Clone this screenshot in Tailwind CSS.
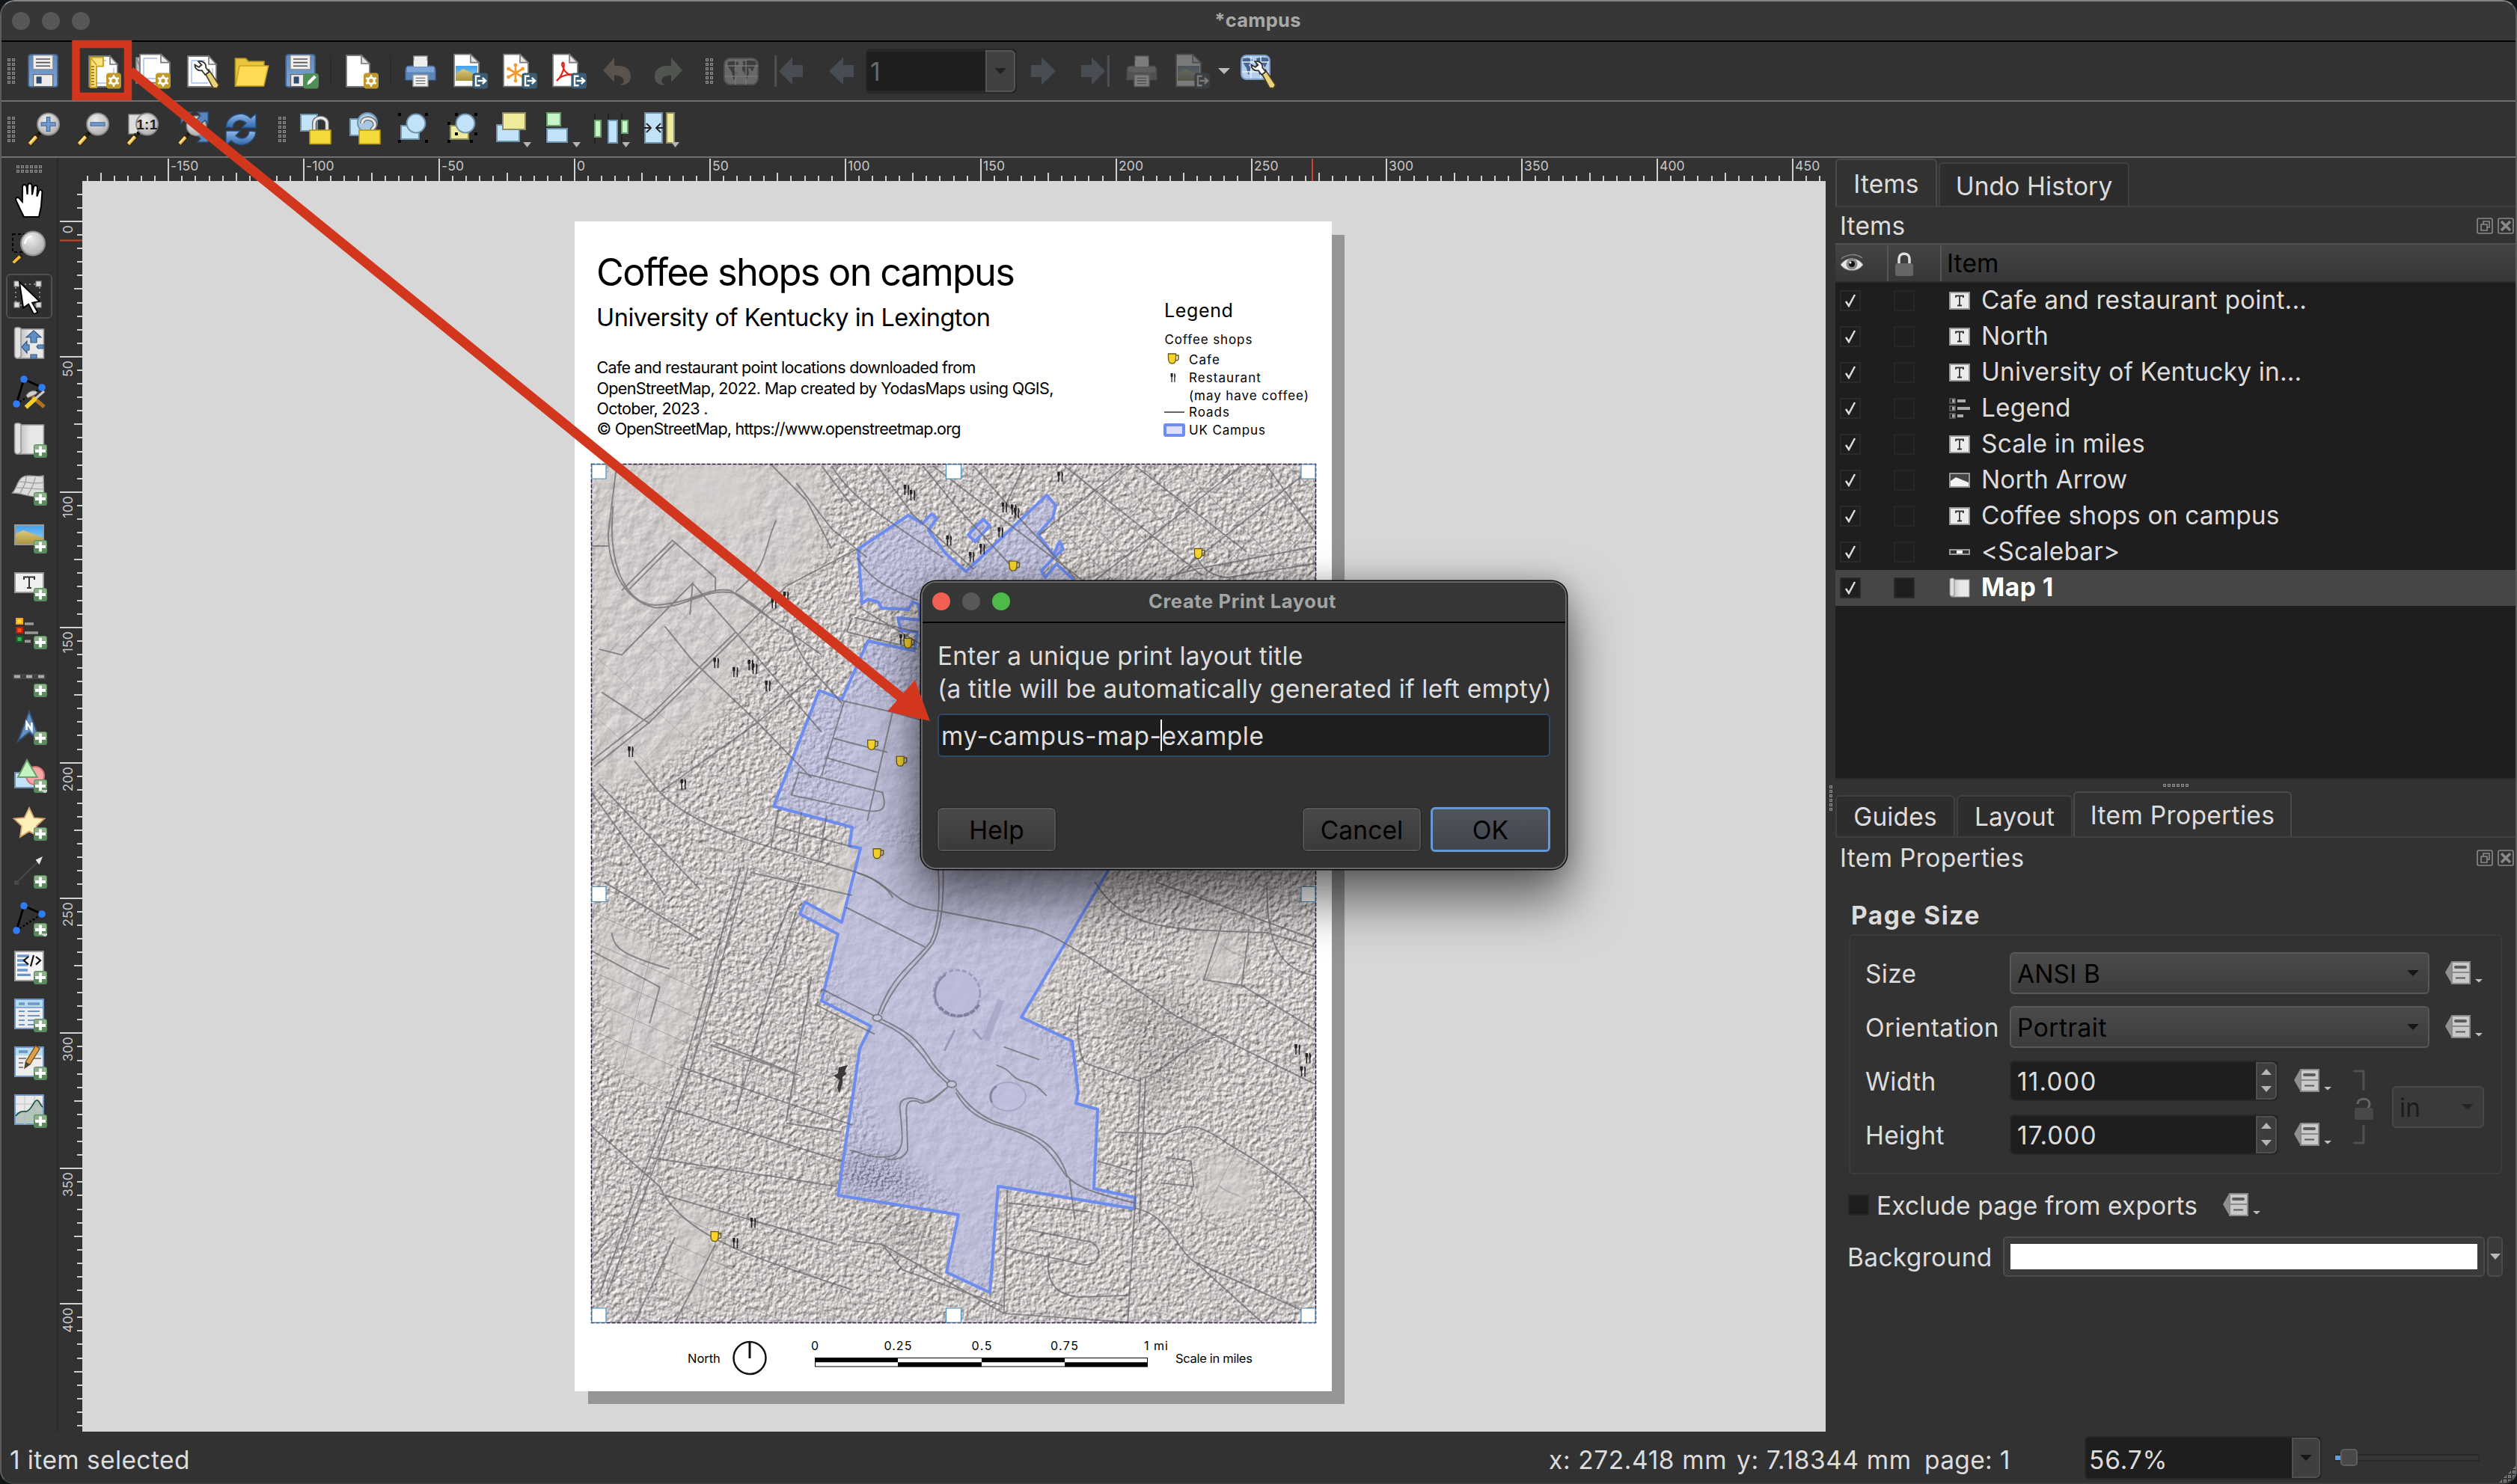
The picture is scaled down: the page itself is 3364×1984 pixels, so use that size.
<!DOCTYPE html>
<html lang="en">
<head>
<meta charset="utf-8">
<title>*campus</title>
<script src="https://cdn.jsdelivr.net/npm/@tailwindcss/browser@4"></script>
</head>
<body class="bg-[#101517] w-[3364px] h-[1984px] overflow-hidden font-['Inter',sans-serif] text-[33.5px] leading-none tracking-[.004em] text-[#dcdcdc]">

<!-- Icon library, 24-unit grid -->
<svg class="absolute size-0">
  <defs>
    <linearGradient id="gFlop" x1="0" y1="0" x2="0" y2="1"><stop offset="0" stop-color="#6089bb"/><stop offset="1" stop-color="#7ba6d6"/></linearGradient>
    <linearGradient id="gGrey" x1="0" y1="0" x2="1" y2="0"><stop offset="0" stop-color="#b8b8b8"/><stop offset=".5" stop-color="#e8e8e8"/></linearGradient>
    <linearGradient id="gSky" x1="0" y1="0" x2="0" y2="1"><stop offset="0" stop-color="#3fa0ea"/><stop offset="1" stop-color="#a5d6f5"/></linearGradient>
    <linearGradient id="gSand" x1="0" y1="0" x2="0" y2="1"><stop offset="0" stop-color="#dccb7c"/><stop offset="1" stop-color="#a8923c"/></linearGradient>
    <linearGradient id="gBlue" x1="0" y1="0" x2="0" y2="1"><stop offset="0" stop-color="#8fb8e6"/><stop offset="1" stop-color="#2f66ab"/></linearGradient>
    <radialGradient id="gLens" cx=".4" cy=".3" r=".8"><stop offset="0" stop-color="#ececec"/><stop offset="1" stop-color="#a9a9a9"/></radialGradient>
    <pattern id="pDots" width="6" height="6" patternUnits="userSpaceOnUse"><rect width="4" height="4" fill="#8a8a8a"/><rect x="1" y="1" width="2" height="2" fill="#555"/></pattern>
  </defs>
  <symbol id="bPlus" viewBox="0 0 24 24"><rect x="15" y="15" width="9" height="9" rx="1.6" fill="#5a8c5a"/><path d="M15.5 19V16.5a1 1 0 0 1 1-1h6a1 1 0 0 1 1 1V19z" fill="#8db08d"/><path d="M19.5 16.2v6.6M16 19.5h7" stroke="#fff" stroke-width="1.9"/></symbol>
  <symbol id="bGear" viewBox="0 0 24 24"><rect x="14" y="13.3" width="10" height="10.4" rx="2" fill="#bf9a2b"/><circle cx="19" cy="18.5" r="2.1" fill="none" stroke="#fff" stroke-width="1.5"/><path d="M19 14.6v1.9M19 20.5v1.9M15.6 16.6l1.7 1M20.7 19.5l1.7 1M15.6 20.4l1.7-1M20.7 17.6l1.7-1" stroke="#fff" stroke-width="1.3"/></symbol>
  <symbol id="bExp" viewBox="0 0 24 24"><rect x="13.7" y="13.3" width="10.3" height="10.4" rx="2" fill="#3a5d75"/><path d="M18.8 15.4h-2.8v6.2h2.8M17.3 18.5h4.9M20.4 16.4l2.2 2.1-2.2 2.1" fill="none" stroke="#fff" stroke-width="1.2"/></symbol>
  <symbol id="save" viewBox="0 0 24 24"><path d="M3 1h17.5l1 1v19.7l-1 .9H3l-1-.9V2z" fill="url(#gFlop)" stroke="#3f618c" stroke-width=".9"/><rect x="5" y="1.4" width="13.4" height="9.5" fill="#ededed" stroke="#888" stroke-width=".6"/><path d="M7 4h9.5M7 6.3h9.5M7 8.6h9.5" stroke="#555" stroke-width=".8"/><rect x="5.3" y="14.3" width="13" height="8" fill="#ececec" stroke="#666" stroke-width=".6"/><rect x="7.3" y="15.7" width="3.5" height="4.6" fill="#2d4a72"/></symbol>
  <symbol id="page" viewBox="0 0 24 24"><path d="M2.5 2h14l5 5.500v15h-19z" fill="#fff" stroke="#777" stroke-width=".9"/><path d="M16.500 2v5.500h5z" fill="#eee" stroke="#777" stroke-width=".8"/><path d="M5 5h9M5 20h11M19 10v8" stroke="#b9cbf2" stroke-width=".9"/></symbol>
  <symbol id="newLayout" viewBox="0 0 24 24"><use href="#page"/><path d="M3.500 2.800H12v6H7.500V23h-4z" fill="#fbe27a" stroke="#c99f1c" stroke-width=".9"/><path d="M3.500 3l4 5" stroke="#c99f1c" stroke-width=".8"/><path d="M4 9h2M4 11h2M4 13h2M4 15h2M4 17h2M4 19h2M4 21h2" stroke="#8d6b0a" stroke-width=".8"/><use href="#bGear"/></symbol>
  <symbol id="dupLayout" viewBox="0 0 24 24"><path d="M1 3h19v19H9z M1 3v17h9" fill="#bbb" stroke="#888" stroke-width=".8"/><path d="M3.500.8h14l6 5.500v13.500h-20z" fill="#fff" stroke="#777" stroke-width=".9"/><path d="M17.500.8v5.500h6z" fill="#eee" stroke="#777" stroke-width=".8"/><path d="M6 3.500h9M6 3.500V17M6 17h9" fill="none" stroke="#b9cbf2" stroke-width=".9"/><use href="#bGear"/></symbol>
  <symbol id="wrench" viewBox="0 0 24 24"><path d="M13.500 12.500l3-1.500 6.800 10.300-1.300 2.200-2.600-.3z" fill="#e8d27c" stroke="#4a4020" stroke-width=".8"/><path d="M9.600 5.600c2.600-.8 5.400 1.200 5 4.200l2.200 2.700-2.700 2-2.200-2.900c-2.500.6-4.700-1.200-4.700-3.800l2.700 1.600 1.800-1.500z" fill="#fff" stroke="#333" stroke-width=".9"/></symbol>
  <symbol id="layoutMgr" viewBox="0 0 24 24"><use href="#page"/><path d="M5 5v15" stroke="#b9cbf2" stroke-width=".9"/><use href="#wrench"/></symbol>
  <symbol id="folder" viewBox="0 0 24 24"><path d="M1.200 3.500h7l1.800 2h10.500V10L2 22H1.200z" fill="#e8c53a" stroke="#b08f1c" stroke-width=".8"/><path d="M4 8.500h19.300L20.300 22H1.400z" fill="#ffdc52" stroke="#c8a428" stroke-width=".8"/></symbol>
  <symbol id="saveTpl" viewBox="0 0 24 24"><use href="#save"/><rect x="13.500" y="13.500" width="10.500" height="10.300" rx="2" fill="#4f8f55"/><path d="M16.200 21.300l.7-2.500 4-4 1.500 1.500-4 4z" fill="#fff"/></symbol>
  <symbol id="narrow" viewBox="0 0 24 24"><path d="M2.500 1.500h10l5.500 5.500v15.500h-15.500z" fill="#fff" stroke="#777" stroke-width=".9"/><path d="M12.500 1.500V7H18z" fill="#e5e5e5" stroke="#777" stroke-width=".8"/></symbol>
  <symbol id="newPage" viewBox="0 0 24 24"><use href="#narrow"/><use href="#bGear"/></symbol>
  <symbol id="print" viewBox="0 0 24 24"><rect x="7.500" y="2" width="9" height="9" fill="#eee" stroke="#999" stroke-width=".7"/><path d="M4.500 8.500h15c1.500 0 2.500 1 2.500 3v6.500H2V11.500c0-2 1-3 2.500-3z" fill="#5b86ba" stroke="#45699a" stroke-width=".6"/><path d="M3 9.300h18v3.500H3z" fill="#7fa6d4"/><rect x="7.500" y="5" width="9" height="4" fill="#eee"/><rect x="7" y="14.500" width="10" height="7.800" fill="#f1f1f1" stroke="#999" stroke-width=".7"/><path d="M8.800 16.700h6.400M8.800 18.500h6.400M8.800 20.300h6.400" stroke="#777" stroke-width=".7"/></symbol>
  <symbol id="expImg" viewBox="0 0 24 24"><path d="M1.500.800h11l5.500 5.500v16h-16.500z" fill="#fff" stroke="#777" stroke-width=".9"/><path d="M12.500.800v5.500H18z" fill="#e5e5e5" stroke="#777" stroke-width=".8"/><rect x="2.500" y="8.500" width="14.500" height="10" fill="url(#gSky)"/><path d="M2.500 14l5-3.500L17 15v3.500H2.500z" fill="url(#gSand)"/><use href="#bExp"/></symbol>
  <symbol id="expSvg" viewBox="0 0 24 24"><path d="M1.500.800h11l5.500 5.500v16h-16.500z" fill="#fff" stroke="#777" stroke-width=".9"/><path d="M12.500.800v5.500H18z" fill="#e5e5e5" stroke="#777" stroke-width=".8"/><path d="M9.500 8v11M4.800 10.500l9.500 5.500M4.800 16l9.500-5.500" stroke="#f79a2b" stroke-width="1.300"/><g fill="#f79a2b"><circle cx="9.500" cy="8" r="1.200"/><circle cx="9.500" cy="18.500" r="1.200"/><circle cx="4.800" cy="10.500" r="1.200"/><circle cx="14.300" cy="10.500" r="1.200"/><circle cx="4.800" cy="16" r="1.200"/></g><use href="#bExp"/></symbol>
  <symbol id="expPdf" viewBox="0 0 24 24"><path d="M1.500.800h11l5.500 5.500v16h-16.500z" fill="#fff" stroke="#777" stroke-width=".9"/><path d="M12.500.800v5.500H18z" fill="#e5e5e5" stroke="#777" stroke-width=".8"/><path d="M4 18.500c2-1.500 5.500-7 4.800-11.500-.6-1.700-1.800 0-.8 2 1.200 3.500 4 6.500 8 5.700M4 18.500c2-3 7-4.600 11.500-4.300" fill="none" stroke="#e2241b" stroke-width="1.100"/><use href="#bExp"/></symbol>
  <symbol id="undo" viewBox="0 0 24 24"><path d="M9.500 3v5.500c6-.5 11 1.500 11 7 0 3.800-2.500 6-6.500 5.800l-1-.3c4 0 4.500-6-3.500-6.200v4.700L2 11.500z" fill="#5a524c"/></symbol>
  <symbol id="redo" viewBox="0 0 24 24"><path d="M14.500 3v5.500c-6-.5-11 1.500-11 7 0 3.800 2.500 6 6.500 5.800l1-.3c-4 0-4.500-6 3.500-6.200v4.700L22 11.500z" fill="#50554f"/></symbol>
  <symbol id="globe" viewBox="0 0 24 24"><path d="M3 5.500c1.200.4 3.500-.5 4.500 0 1.500.2 2.700.3 2.500 1.500-.4 1-1.300 1-1.500 2-.5.800-1.500 1.200-1.300 2 .8.500 1.800 1.500 1.500 2.500-.4 1-1 2.500-1.500 4.500-.9-1-1.200-4-1.700-5.300C5 12 3.500 9.500 2.500 8zM12.500 6c1.800-1.200 5-1.400 8.500-.8l1 1.700-1.300 2.500-1.500 3-1.700-2.500-1 .5.500 3-1.500 4.500c-.9-.4-1.200-3.500-1.500-5l-1.500-1.500c-.2-1.700.2-3.500 1-4.500z"/></symbol>
  <symbol id="atlas" viewBox="0 0 24 24"><rect x=".5" y="3.500" width="22.500" height="17.500" rx="4" fill="#686868" stroke="#505050"/><use href="#globe" fill="#3e3e3e"/><path d="M1 8.500h22M1 15.500h22M8 4v17M15 4v17" stroke="#777" stroke-width=".7"/></symbol>
  <symbol id="atlasCfg" viewBox="0 0 24 24"><rect x=".5" y="1.500" width="19" height="16" rx="3.500" fill="#b5cdec" stroke="#7d9cc5"/><g transform="translate(-1 -1.500) scale(.9)"><use href="#globe" fill="#46648d"/></g><path d="M1 6h18M1 12.500h18M7 2v15M13.500 2v15" stroke="#e8f1fc" stroke-width=".7"/><use href="#wrench"/></symbol>
  <symbol id="aPrev" viewBox="0 0 24 24"><path d="M4 12L13.500 2.800V8h7v8h-7v5.200z" fill="#474d52"/></symbol>
  <symbol id="aFirst" viewBox="0 0 24 24"><rect x="1" y="1.500" width="1.600" height="21" fill="#4a4f54"/><path d="M4 12L13 2.800V8h7v8h-7v5.200z" fill="#474d52"/></symbol>

  <symbol id="lens" viewBox="0 0 24 24"><path d="M2.500 22l6-6.500" stroke="#2a2412" stroke-width="3.600"/><path d="M2.700 21.800l4.500-5" stroke="#f0b93a" stroke-width="2.400"/><path d="M3 21l4-4.400" stroke="#fff0c0" stroke-width=".8"/><circle cx="9.500" cy="14.500" r="1.300" fill="#111"/><circle cx="15.300" cy="8.500" r="7.300" fill="url(#gLens)" stroke="#8a8a8a" stroke-width=".9"/></symbol>
  <symbol id="zIn" viewBox="0 0 24 24"><use href="#lens"/><path d="M15.300 3.500v10M10.300 8.500h10" stroke="#3d6596" stroke-width="2.800"/><path d="M15.300 4v9M10.800 8.500h9" stroke="#6f9bcb" stroke-width="1.700"/></symbol>
  <symbol id="zOut" viewBox="0 0 24 24"><use href="#lens"/><path d="M10.300 8.500h10" stroke="#3d6596" stroke-width="2.800"/><path d="M10.800 8.500h9" stroke="#6f9bcb" stroke-width="1.700"/></symbol>
  <symbol id="z11" viewBox="0 0 24 24"><rect x="3" y="2" width="13" height="13" fill="#ddd" stroke="#888" stroke-width=".7"/><use href="#lens"/><text x="15.200" y="12.200" text-anchor="middle" font-family="Liberation Sans" font-weight="700" font-size="9.500" fill="#222">1:1</text></symbol>
  <symbol id="zFull" viewBox="0 0 24 24"><path d="M5 .5h7l-2 2.300 4 4-3 3-4-4L5 8zM23 .5h-7l2 2.300-4 4 3 3 4-4L23 8zM23 20.500h-7l2-2.300-4-4 3-3 4 4L23 13z" fill="#5b86ba" stroke="#2f527f" stroke-width=".7"/><g transform="translate(1.500 2) scale(.9)"><use href="#lens"/></g><path d="M23 .5h-7l2 2.300-3 3 3 3 3-3L23 8z" fill="#5b86ba" stroke="#2f527f" stroke-width=".7"/></symbol>
  <symbol id="refresh" viewBox="0 0 24 24"><path d="M2 10.500C2.500 3 12 -1.500 18.500 4.500L22 1.500v9.500h-9.500l3-3.200C11.500 4.500 7 6 6.500 11z" fill="url(#gBlue)" stroke="#234c80" stroke-width=".7"/><path d="M22 13.500C21.500 21 12 25.500 5.500 19.500L2 22.500V13h9.500l-3 3.200c4 3.300 8.500 1.800 9-3.200z" fill="url(#gBlue)" stroke="#234c80" stroke-width=".7"/></symbol>
  <symbol id="lockI" viewBox="0 0 24 24"><rect x="2" y="2" width="11" height="11" fill="#c2e2f8" stroke="#6d93ad"/><path d="M11 13V8c0-5 8.500-5 8.500 0v5" fill="none" stroke="#666" stroke-width="3"/><path d="M11 13V8c0-5 8.500-5 8.500 0v5" fill="none" stroke="#e8e8e8" stroke-width="1.700"/><rect x="8" y="12.500" width="14" height="9.200" fill="#f4da3a" stroke="#b6961a" stroke-width=".8"/></symbol>
  <symbol id="unlockI" viewBox="0 0 24 24"><rect x="2" y="5" width="10" height="11" fill="#c2e2f8" stroke="#6d93ad"/><circle cx="13.500" cy="7.500" r="6.500" fill="#a9c9e2" stroke="#6d93ad"/><path d="M10 8c0-5 9.500-4 8.500 1.500-.5 1.800-2 1.500-2 3.500" fill="none" stroke="#666" stroke-width="2.800"/><path d="M10 8c0-5 9.500-4 8.500 1.500-.5 1.800-2 1.500-2 3.500" fill="none" stroke="#e8e8e8" stroke-width="1.600"/><rect x="8" y="12.500" width="14" height="9.200" fill="#f4da3a" stroke="#b6961a" stroke-width=".8"/></symbol>
  <symbol id="groupI" viewBox="0 0 24 24"><g fill="#000"><path d="M1 1h2v2H1zM19 1h2v2h-2zM1 19h2v2H1zM19 19h2v2h-2z"/></g><rect x="3" y="9.500" width="12" height="9" fill="#c2e2f8" stroke="#6d93ad"/><circle cx="13" cy="8" r="6.200" fill="#c2e2f8" stroke="#6d93ad"/></symbol>
  <symbol id="ungroupI" viewBox="0 0 24 24"><rect x="3" y="9.500" width="12" height="9" fill="#eeec9c" stroke="#8f8d5a"/><circle cx="13" cy="8" r="6.200" fill="#c2e2f8" stroke="#6d93ad"/><path d="M6 1h2v2H6zM19 1h2v2h-2zM1 7h2v2H1zM1 19h2v2H1zM16 19h2v2h-2zM19 14h2v2h-2zM6 14h2v2H6z" fill="#000"/></symbol>
  <symbol id="dropT" viewBox="0 0 24 24"><path d="M18.600 20.500h5.400L21.300 24z" fill="#b5b5b5"/></symbol>
  <symbol id="raise" viewBox="0 0 24 24"><rect x="1" y="9" width="15" height="11" fill="#c2e2f8" stroke="#6d93ad"/><rect x="5" y="1" width="15" height="11" fill="#eeec9c" stroke="#8f8d6a"/><use href="#dropT"/></symbol>
  <symbol id="alignL" viewBox="0 0 24 24"><path d="M1 1v21" stroke="#222"/><rect x="1.500" y="1" width="9" height="8.500" fill="#c6f5c8" stroke="#6da06f"/><rect x="1.500" y="11.500" width="13.500" height="9" fill="#c2e2f8" stroke="#6d93ad"/><use href="#dropT"/></symbol>
  <symbol id="distrib" viewBox="0 0 24 24"><path d="M.5 1v21M9.500 1v21M18.500 1v21" stroke="#222"/><rect x=".5" y="6" width="4" height="11" fill="#c6f5c8" stroke="#6da06f"/><rect x="9.500" y="6" width="6" height="15" fill="#c2e2f8" stroke="#6d93ad"/><rect x="18.500" y="6" width="4" height="8.500" fill="#c6f5c8" stroke="#6da06f"/><use href="#dropT"/></symbol>
  <symbol id="resizeI" viewBox="0 0 24 24"><rect x="1" y="1" width="11.500" height="20" fill="#c2e2f8" stroke="#6d93ad"/><rect x="15.500" y="1" width="5" height="20" fill="#eeec9c" stroke="#8f8d6a"/><path d="M.5 11h4M2 8l3 3-3 3M13 11h-4M11.500 8l-3 3 3 3" fill="none" stroke="#222" stroke-width=".9"/><use href="#dropT"/></symbol>

  <symbol id="hand" viewBox="0 0 24 24"><path d="M8.500 23L6 18 3.200 12c-.6-1.800 1-2.800 2.400-1.200l1.800 2L7.500 3c0-2 2.600-2 2.800 0l.5 5 .3-6c.2-1.800 2.500-1.800 2.700 0l.2 6.200 1-5.200c.3-1.500 2.500-1.300 2.500.3l-.3 6 1.200-3.500c.6-1.500 2.400-.9 2.300.6L20 16l-1.500 7z" fill="#fff" stroke="#000" stroke-width="1"/></symbol>
  <symbol id="zoomT" viewBox="0 0 24 24"><path d="M1 2.500h13v12H1z" fill="none" stroke="#000" stroke-dasharray="2 1.500"/><path d="M1 22l6-5.500" stroke="#2a2412" stroke-width="3"/><path d="M1.300 21.700l4.600-4.300" stroke="#f0b93a" stroke-width="2"/><circle cx="14.500" cy="8.700" r="8" fill="url(#gLens)" stroke="#8f8f8f"/><path d="M9 9c.3-3 2.500-5 5-5" stroke="#fff" stroke-width="1.300" fill="none"/></symbol>
  <symbol id="selT" viewBox="0 0 24 24"><path d="M3 4h16v14H3z" fill="none" stroke="#8a8a8a" stroke-dasharray="1 2"/><path d="M2 2h3.500v3.500H2zM16.500 2H20v3.500h-3.500zM2 16h3.500v3.500H2zM16.500 16H20v3.500h-3.500z" fill="#ddd" stroke="#888" stroke-width=".6"/><path d="M5.500 2.500l13.500 13-5 .8 3.700 6.500-2.600 1.200-3.500-6.700-3.500 2.500z" fill="#fff" stroke="#000" stroke-width=".9"/></symbol>
  <symbol id="scroll" viewBox="0 0 24 24"><rect x="4" y="2" width="17.700" height="19.500" fill="url(#gGrey)" stroke="#999" stroke-width=".8"/><path d="M2.300 2c0-1.500 4.200-1.500 4.200 0v16c1 2-1 3.700-2.700 3.500C2.500 21.300 2.300 20 2.300 19z" fill="#e2e2e2" stroke="#999" stroke-width=".8"/></symbol>
  <symbol id="moveC" viewBox="0 0 24 24"><use href="#scroll"/><path d="M15 3l5 4.500h-3V11h-4V7.500h-3zM7 14l3.500-4v2.500H12v3.500h-1.500V18zM18 12.500h3.500V15H18l-1-1.200zM13 19h4v2.500h-4z" fill="#5f90c4" stroke="#37587f" stroke-width=".6"/></symbol>
  <symbol id="nodes" viewBox="0 0 24 24"><path d="M8.500 3.500l12 5.500M8.500 3.500l-5 16.500" stroke="#000" stroke-width="1.400"/><path d="M3.500 20l17-11" stroke="#000" stroke-width="1.200" stroke-dasharray="1.300 1.300"/><g fill="#2f7df6"><circle cx="8.500" cy="3.500" r="2.400"/><circle cx="20.500" cy="9" r="2.400"/><circle cx="3.500" cy="20" r="2.400"/></g></symbol>
  <symbol id="editN" viewBox="0 0 24 24"><use href="#nodes"/><path d="M14 15l8 7" stroke="#b0701e" stroke-width="2.600"/><path d="M9.800 22L22 11.500" stroke="#c9c9c9" stroke-width="1.600"/><path d="M9.800 22.300l6.500-6" stroke="#f4cf2a" stroke-width="2.800"/><path d="M10 14.500c1.500-3 5-4 7.500-2.500l-1 1.500-5.500 2.500z" fill="#cfcfcf" stroke="#777" stroke-width=".5"/></symbol>
  <symbol id="addMap" viewBox="0 0 24 24"><use href="#scroll"/><use href="#bPlus"/></symbol>
  <symbol id="add3d" viewBox="0 0 24 24"><path d="M.8 15.500C4 12 4 7 7.500 5c4-2.500 10 .5 14-1l.3 13-6 1C10 17.500 6 15.500.8 15.500z" fill="#dcdcdc" stroke="#999" stroke-width=".7"/><path d="M3.500 12c6 0 12 1 18 1M5 8c6 0 11 2 16.500.5M10 4.500c0 5-2 7-4 11M16 5c-.5 5-3 8-5 12" fill="none" stroke="#999" stroke-width=".6"/><use href="#bPlus"/></symbol>
  <symbol id="addPic" viewBox="0 0 24 24"><rect x="2.500" y="5" width="19" height="13" fill="url(#gSky)"/><path d="M2.500 11l5.500-2.500 13.500 5V18h-19z" fill="url(#gSand)"/><rect x="2.500" y="5" width="19" height="13" fill="none" stroke="#999"/><use href="#bPlus"/></symbol>
  <symbol id="addLbl" viewBox="0 0 24 24"><rect x="2.500" y="5" width="19" height="13" fill="#f0f0f0" stroke="#999"/><path d="M8.500 9.500V7.800h7v1.700M12 7.800v7M10.500 15h3" fill="none" stroke="#333" stroke-width="1"/><use href="#bPlus"/></symbol>
  <symbol id="addLeg" viewBox="0 0 24 24"><rect x="3" y="3" width="5" height="4.500" fill="#f5a623"/><rect x="4.200" y="4" width="2.600" height="2.500" fill="#ffdd33"/><rect x="3" y="9" width="5" height="4.500" fill="#b5230f"/><rect x="4.200" y="10" width="2.600" height="2.500" fill="#ff4a22"/><rect x="3" y="15" width="5" height="4.500" fill="#1c5a2a"/><rect x="4.200" y="16" width="2.600" height="2.500" fill="#37b556"/><path d="M9 7h6M9 13h9M9 18.700h4" stroke="#999" stroke-width="1.800"/><use href="#bPlus"/></symbol>
  <symbol id="addBar" viewBox="0 0 24 24"><rect x="1" y="8.500" width="22" height="3.500" fill="#444"/><path d="M2 10.200h4M10 10.200h4M18 10.200h4" stroke="#aaa" stroke-width="2"/><use href="#bPlus"/></symbol>
  <symbol id="addNorth" viewBox="0 0 24 24"><path d="M12 1.500l7.500 20L12 15.500 4.500 21.500z" fill="#6590c2" stroke="#355379"/><path d="M10.300 14V9l3.400 5V9" fill="none" stroke="#fff" stroke-width="1.300"/><use href="#bPlus"/></symbol>
  <symbol id="addShape" viewBox="0 0 24 24"><rect x="2.500" y="10.500" width="13" height="10" fill="#c2e2f8" stroke="#6d93ad"/><circle cx="16" cy="12.500" r="6" fill="#f7a8a8" stroke="#d87070"/><path d="M10.500 2l6.800 11.500H4.500z" fill="#c0f5c0" stroke="#6da06f" stroke-width="1"/><use href="#bPlus"/><path d="M19.500 22h6L22.500 24.500z" fill="#c8d0c8"/></symbol>
  <symbol id="addStar" viewBox="0 0 24 24"><path d="M12 2l3.200 6.700 7 .5-5.400 5 1.700 7-6.500-3.500L6 21.500l1-7.300L1.800 9.200l7-.6z" fill="#fdf0b8" stroke="#d99f6c" stroke-width=".9"/><use href="#bPlus"/></symbol>
  <symbol id="addArrow" viewBox="0 0 24 24"><path d="M3.500 20L18 6" stroke="#484848"/><rect x="2" y="18.500" width="3" height="3" fill="#484848"/><path d="M21 2.500l-2.200 5.500-2.500-3.200z" fill="#e8e8e8"/><use href="#bPlus"/></symbol>
  <symbol id="addNode" viewBox="0 0 24 24"><use href="#nodes"/><use href="#bPlus"/><path d="M19.500 22h6L22.500 24.500z" fill="#c8d0c8"/></symbol>
  <symbol id="addHtml" viewBox="0 0 24 24"><rect x="2.500" y="2" width="19" height="19.500" fill="#f5f5f5" stroke="#999"/><path d="M4 5h8M4 8h5M4 11h7M4 14.500h7M4 17.700h9" stroke="#6d97cc" stroke-width="1.700"/><path d="M11.500 5.500L8.500 8l3 2.800M16.500 5.500l3 2.500-3 2.800M15 4.500l-2 7.500" fill="none" stroke="#111" stroke-width="1.100"/><use href="#bPlus"/></symbol>
  <symbol id="addTab" viewBox="0 0 24 24"><rect x="2.500" y="2" width="19" height="19.500" fill="#ededed" stroke="#7097c9"/><rect x="3" y="2.500" width="18" height="5" fill="#b7dcf0"/><path d="M3 7.500h18" stroke="#7097c9" stroke-width=".8"/><path d="M5 5h4M11 5h8" stroke="#6d97cc" stroke-width="1.800"/><path d="M5 10h4M11 10h8M5 13h4M11 13h8M5 16h4M11 16h5M5 19h4M11 19h4" stroke="#6d97cc" stroke-width=".9"/><use href="#bPlus"/></symbol>
  <symbol id="addFix" viewBox="0 0 24 24"><rect x="2.500" y="2" width="19" height="19.500" fill="#ededed" stroke="#7097c9"/><rect x="3" y="2.500" width="18" height="5" fill="#b7dcf0"/><path d="M5 5h6" stroke="#6d97cc" stroke-width="1.800"/><path d="M5 9.500h5M5 12.500h3M5 15.500h3M14 9.500h6" stroke="#888" stroke-width=".9"/><path d="M16.300 1l2.700 2-6.500 10.500-3.500 2.500.7-4.300z" fill="#dda04a" stroke="#7d4d14" stroke-width=".7"/><path d="M9 16l.6-4.300 3 1.700z" fill="#444"/><use href="#bPlus"/></symbol>
  <symbol id="addProf" viewBox="0 0 24 24"><rect x="2.500" y="2" width="19" height="19.500" fill="#e9e9e9" stroke="#7097c9"/><path d="M3 8h18M3 14h18M9 2.500v19M15.500 2.500v19" stroke="#ccc" stroke-width=".7"/><path d="M3 16c3-4 5-3 7-3 4-1 5-8 7.500-7.500 1.500.5 2.500 3 3.500 4.500v11H3z" fill="#a9bcb2" opacity=".8"/><path d="M3 16c3-4 5-3 7-3 4-1 5-8 7.500-7.500 1.500.5 2 3.500 3.500 4.500" fill="none" stroke="#1d5a45" stroke-width=".9"/><use href="#bPlus"/></symbol>

  <symbol id="dock" viewBox="0 0 50 24"><g fill="none" stroke="#8a8a8a" stroke-width="1.600"><rect x="1" y="1" width="20" height="20" rx="2"/><path d="M6 9h8v8H6zM9 9V5h8v8h-3"/><rect x="29" y="1" width="20" height="20" rx="2"/><path d="M33 5l12 12M45 5L33 17" stroke-width="3.500"/></g></symbol>
  <symbol id="itT" viewBox="0 0 28 24"><rect x="1" y="1" width="26" height="22" fill="#ececec" stroke="#999" stroke-width="2"/><path d="M9 8V5.500h10V8M14 5.500v13M11 18.500h6" fill="none" stroke="#333" stroke-width="1.800"/></symbol>
  <symbol id="itLeg" viewBox="0 0 28 28"><path d="M4 4h4M4 14h4M4 24h4" stroke="#aaa" stroke-width="5"/><path d="M11 4h11M11 14h17M11 24h8" stroke="#aaa" stroke-width="4"/><path d="M1 1h7v6H1zM1 11h7v6H1zM1 21h7v6H1z" fill="none" stroke="#666" stroke-width="1.500"/></symbol>
  <symbol id="itPic" viewBox="0 0 28 20"><rect x="1" y="1" width="26" height="18" fill="#444" stroke="#999" stroke-width="2"/><path d="M2 11l7-5 17 7v5H2z" fill="#f1f1f1"/></symbol>
  <symbol id="itBar" viewBox="0 0 28 8"><rect x="1" y="1" width="26" height="6" fill="#333" stroke="#999" stroke-width="2"/><rect x="10" y="2" width="8" height="4" fill="#fff"/></symbol>
  <symbol id="itMap" viewBox="0 0 28 28"><rect x="3" y="3" width="24" height="23" fill="url(#gGrey)" stroke="#999" stroke-width="1"/><rect x="1" y="1" width="6" height="24" rx="2" fill="#ddd" stroke="#888" stroke-width="1"/></symbol>
  <symbol id="ovr" viewBox="0 0 52 34"><path d="M9 2L1 16l8 14z" fill="#8f8f8f"/><rect x="9" y="1" width="26" height="31" fill="#8a8a8a"/><rect x="11" y="3" width="22" height="12" fill="#c9c9c9"/><rect x="11" y="17" width="22" height="13" fill="#c9c9c9"/><rect x="13" y="7" width="17" height="4" rx="2" fill="#5b5b5b"/><path d="M15 23.500h13" stroke="#5b5b5b" stroke-width="2"/><path d="M41 25h10l-5 4.500z" fill="#c0c0c0"/></symbol>
</svg>

<div class="relative flex flex-col w-[3364px] h-[1984px] bg-[#323232] rounded-t-[20px] rounded-b-[18px] border-2 border-[#5c5c5c] border-t-[#858585] border-b-[#3c3c3c] overflow-hidden">

  <!-- Title bar -->
  <div class="relative flex items-center justify-center h-[54px] bg-[#373737] border-b-2 border-black shrink-0 text-[25.5px] font-bold text-[#a8a8a8]">
    <div class="absolute left-[14px] top-[14px] flex gap-4">
      <span class="size-6 rounded-full bg-[#565757]"></span><span class="size-6 rounded-full bg-[#565757]"></span><span class="size-6 rounded-full bg-[#565757]"></span>
    </div>
    <span class="-translate-x-px -translate-y-px tracking-[.01em]">*campus</span>
  </div>

  <!-- Layout / atlas toolbar -->
  <div class="flex items-center h-[80px] border-b-2 border-[#707070] shrink-0">
    <svg class="w-[10px] h-[34px] ml-2 mr-[5px]"><rect width="10" height="34" fill="url(#pDots)"/></svg>
    <div class="w-[66px] flex justify-center"><svg class="size-12"><use href="#save"/></svg></div>
    <div class="w-[14px]"></div>
    <div class="w-[66px] flex justify-center"><svg class="size-12"><use href="#newLayout"/></svg></div>
    <div class="w-[66px] flex justify-center"><svg class="size-12"><use href="#dupLayout"/></svg></div>
    <div class="w-[66px] flex justify-center"><svg class="size-12"><use href="#layoutMgr"/></svg></div>
    <div class="w-[66px] flex justify-center"><svg class="size-12"><use href="#folder"/></svg></div>
    <div class="w-[66px] flex justify-center"><svg class="size-12"><use href="#saveTpl"/></svg></div>
    <div class="w-[14px] flex justify-center"><span class="w-[2px] h-10 bg-[#2b2b2b]"></span></div>
    <div class="w-[66px] flex justify-center"><svg class="size-12"><use href="#newPage"/></svg></div>
    <div class="w-[14px] flex justify-center"><span class="w-[2px] h-10 bg-[#2b2b2b]"></span></div>
    <div class="w-[66px] flex justify-center"><svg class="size-12"><use href="#print"/></svg></div>
    <div class="w-[66px] flex justify-center"><svg class="size-12"><use href="#expImg"/></svg></div>
    <div class="w-[66px] flex justify-center"><svg class="size-12"><use href="#expSvg"/></svg></div>
    <div class="w-[66px] flex justify-center"><svg class="size-12"><use href="#expPdf"/></svg></div>
    <div class="w-[66px] flex justify-center"><svg class="size-12"><use href="#undo"/></svg></div>
    <div class="w-[66px] flex justify-center"><svg class="size-12"><use href="#redo"/></svg></div>
    <svg class="w-[10px] h-[34px] ml-[18px] mr-[5px]"><rect width="10" height="34" fill="url(#pDots)"/></svg>
    <div class="w-[66px] flex justify-center"><svg class="size-12"><use href="#atlas"/></svg></div>
    <div class="w-[66px] flex justify-center"><svg class="size-12"><use href="#aFirst"/></svg></div>
    <div class="w-[67px] flex justify-center"><svg class="size-12"><use href="#aPrev"/></svg></div>
    <div class="flex w-[202px] h-[60px] rounded-md border-2 border-[#272727] bg-[#1e1e1e]">
      <div class="flex-1 flex items-center pl-[4px] text-[#6a6a6a] border-y-2 border-[#2a2a2a] pt-1">1</div>
      <div class="w-[40px] flex items-center justify-center bg-[#404040] border-2 border-[#555] rounded-r-md"><svg class="w-4 h-2"><path d="M0 0h16l-8 8z" fill="#222"/></svg></div>
    </div>
    <div class="w-[72px] flex justify-center"><svg class="size-12 -scale-x-100"><use href="#aPrev"/></svg></div>
    <div class="w-[60px] flex justify-center"><svg class="size-12 -scale-x-100"><use href="#aFirst"/></svg></div>
    <div class="w-[70px] flex justify-center grayscale opacity-40"><svg class="size-12"><use href="#print"/></svg></div>
    <div class="w-[64px] flex justify-center opacity-35 grayscale-75"><svg class="size-12"><use href="#expImg"/></svg></div>
    <div class="w-[22px] flex justify-center"><svg class="w-4 h-2"><path d="M0 0h16l-8 8z" fill="#bbb"/></svg></div>
    <div class="w-[70px] flex justify-center"><svg class="size-12"><use href="#atlasCfg"/></svg></div>
  </div>

  <!-- Navigation / actions toolbar -->
  <div class="flex items-center h-[75px] pt-px border-b-2 border-[#707070] shrink-0">
    <svg class="w-[10px] h-[34px] ml-2 mr-[5px]"><rect width="10" height="34" fill="url(#pDots)"/></svg>
    <div class="w-[66px] flex justify-center"><svg class="size-12"><use href="#zIn"/></svg></div>
    <div class="w-[66px] flex justify-center"><svg class="size-12"><use href="#zOut"/></svg></div>
    <div class="w-[66px] flex justify-center"><svg class="size-12"><use href="#z11"/></svg></div>
    <div class="w-[66px] flex justify-center"><svg class="size-12"><use href="#zFull"/></svg></div>
    <div class="w-[66px] flex justify-center"><svg class="size-12"><use href="#refresh"/></svg></div>
    <svg class="w-[10px] h-[34px] ml-[17px] mr-[7px]"><rect width="10" height="34" fill="url(#pDots)"/></svg>
    <div class="w-[66px] flex justify-center"><svg class="size-12"><use href="#lockI"/></svg></div>
    <div class="w-[66px] flex justify-center"><svg class="size-12"><use href="#unlockI"/></svg></div>
    <div class="w-[66px] flex justify-center"><svg class="size-12"><use href="#groupI"/></svg></div>
    <div class="w-[66px] flex justify-center"><svg class="size-12"><use href="#ungroupI"/></svg></div>
    <div class="w-[66px] flex justify-center"><svg class="size-12"><use href="#raise"/></svg></div>
    <div class="w-[66px] flex justify-center"><svg class="size-12"><use href="#alignL"/></svg></div>
    <div class="w-[66px] flex justify-center"><svg class="size-12"><use href="#distrib"/></svg></div>
    <div class="w-[66px] flex justify-center"><svg class="size-12"><use href="#resizeI"/></svg></div>
  </div>

  <div class="flex h-[1703px] shrink-0">
    <!-- Toolbox -->
    <div class="flex flex-col items-center w-[76px] border-r-2 border-[#282828] shrink-0">
      <svg class="w-[34px] h-[10px] mt-[10px] mb-[5px] shrink-0"><rect width="34" height="10" fill="url(#pDots)"/></svg>
      <div class="h-16 flex items-center"><svg class="size-12"><use href="#hand"/></svg></div>
      <div class="h-16 flex items-center"><svg class="size-12"><use href="#zoomT"/></svg></div>
      <div class="h-16 flex items-center"><div class="flex items-center justify-center w-[62px] h-[60px] rounded-md border-2 border-[#505050] bg-[#2f2f2f]"><svg class="size-12"><use href="#selT"/></svg></div></div>
      <div class="h-16 flex items-center"><svg class="size-12"><use href="#moveC"/></svg></div>
      <div class="h-16 flex items-center"><svg class="size-12"><use href="#editN"/></svg></div>
      <div class="h-16 flex items-center"><svg class="size-12"><use href="#addMap"/></svg></div>
      <div class="h-16 flex items-center"><svg class="size-12"><use href="#add3d"/></svg></div>
      <div class="h-16 flex items-center"><svg class="size-12"><use href="#addPic"/></svg></div>
      <div class="h-16 flex items-center"><svg class="size-12"><use href="#addLbl"/></svg></div>
      <div class="h-16 flex items-center"><svg class="size-12"><use href="#addLeg"/></svg></div>
      <div class="h-16 flex items-center"><svg class="size-12"><use href="#addBar"/></svg></div>
      <div class="h-16 flex items-center"><svg class="size-12"><use href="#addNorth"/></svg></div>
      <div class="h-16 flex items-center"><svg class="size-12 overflow-visible"><use href="#addShape"/></svg></div>
      <div class="h-16 flex items-center"><svg class="size-12"><use href="#addStar"/></svg></div>
      <div class="h-16 flex items-center"><svg class="size-12"><use href="#addArrow"/></svg></div>
      <div class="h-16 flex items-center"><svg class="size-12 overflow-visible"><use href="#addNode"/></svg></div>
      <div class="h-16 flex items-center"><svg class="size-12"><use href="#addHtml"/></svg></div>
      <div class="h-16 flex items-center"><svg class="size-12"><use href="#addTab"/></svg></div>
      <div class="h-16 flex items-center"><svg class="size-12"><use href="#addFix"/></svg></div>
      <div class="h-16 flex items-center"><svg class="size-12"><use href="#addProf"/></svg></div>
    </div>

    <!-- Rulers and canvas -->
    <div class="flex flex-col w-[2362px] shrink-0">
      <svg id="hr" class="w-[2362px] h-[31px] shrink-0" viewBox="78 211 2362 31"></svg>
      <div class="flex">
        <svg id="vr" class="w-[32px] h-[1672px] shrink-0" viewBox="78 242 32 1672"></svg>
        <svg class="w-[2330px] h-[1672px] shrink-0 bg-[#d7d7d7]" viewBox="110 242 2330 1672" font-family="Inter, sans-serif">
          <defs>
            <filter id="relief" x="0" y="0" width="1" height="1" color-interpolation-filters="sRGB">
              <feTurbulence type="fractalNoise" baseFrequency=".16" numOctaves="3" seed="7"/>
              <feDiffuseLighting surfaceScale="1.500" diffuseConstant="1.050" lighting-color="#fdf7f6"><feDistantLight azimuth="225" elevation="50"/></feDiffuseLighting>
            </filter>
            <filter id="reliefSoft" x="0" y="0" width="1" height="1" color-interpolation-filters="sRGB">
              <feTurbulence type="fractalNoise" baseFrequency=".06" numOctaves="4" seed="3"/>
              <feDiffuseLighting surfaceScale=".9" diffuseConstant="1.070" lighting-color="#fdf7f6"><feDistantLight azimuth="225" elevation="50"/></feDiffuseLighting>
            </filter>
            <filter id="reliefHard" x="0" y="0" width="1" height="1" color-interpolation-filters="sRGB">
              <feTurbulence type="fractalNoise" baseFrequency=".25" numOctaves="3" seed="11"/>
              <feDiffuseLighting surfaceScale="5" diffuseConstant=".9" lighting-color="#fdf7f6"><feDistantLight azimuth="225" elevation="50"/></feDiffuseLighting>
            </filter>
            <filter id="soft"><feGaussianBlur stdDeviation="14"/></filter>
            <mask id="mSoft"><g fill="#fff" filter="url(#soft)"><path d="M790 620H1100L1090 760 1020 800 960 960 860 1040 790 1060z"/><path d="M1090 1200L1140 1110 1300 1160 1490 1150 1370 1360 1460 1480 1460 1590 1330 1580 1310 1720 1270 1690 1285 1610 1180 1530z"/><path d="M790 1210l90 60 60 60-60 130-60-40z"/><path d="M1610 1240l55 10-20 70-50-10z"/><path d="M1610 1540l60 10 10 70-70 0z"/><path d="M900 1590l60 40-20 130-40-60z"/><path d="M1140 930L1230 950 1230 1110 1130 1090z"/></g></mask>
            <mask id="mHard"><g fill="#fff" filter="url(#soft)"><path d="M1125 1545l60 0 60 60-120-15z"/><path d="M1480 1340l90-20 50 80-80 90z" opacity=".35"/><path d="M1170 1630l60-10 20 50-50 10z" opacity=".35"/></g></mask>
            <pattern id="gNE" width="46" height="34" patternUnits="userSpaceOnUse" patternTransform="rotate(44)"><path d="M0 0H46M0 0V34" fill="none" stroke="#777" stroke-width="2"/></pattern>
            <pattern id="gSW" width="90" height="36" patternUnits="userSpaceOnUse" patternTransform="rotate(24) skewX(10)"><path d="M0 0H90M0 0V36" fill="none" stroke="#7a7877" stroke-width="2"/></pattern>
            <pattern id="gE" width="70" height="48" patternUnits="userSpaceOnUse" patternTransform="rotate(27)"><path d="M0 0C20 8 50-8 70 0M0 0V48" fill="none" stroke="#7a7877" stroke-width="2"/></pattern>
            <pattern id="gW" width="60" height="44" patternUnits="userSpaceOnUse" patternTransform="rotate(-48)"><path d="M0 0H60M0 0V44" fill="none" stroke="#8a8786" stroke-width="1.500"/></pattern>
            <clipPath id="cMap"><rect x="790" y="620" width="969" height="1149"/></clipPath>
            <symbol id="cup" viewBox="0 0 18 16"><path d="M2 1h10v6c0 5-2 7-5 7s-5-2-5-7z" fill="#f9d52c" stroke="#6b5a14" stroke-width="1.300"/><path d="M12 3h3.500v4.500c0 2-2 2.500-4 2.500" fill="none" stroke="#6b5a14" stroke-width="1.500"/></symbol>
            <symbol id="fork" viewBox="0 0 10 14"><path d="M1 0v4.500c0 1 .7 1.300 1 1.500V14h1.500V6c.500-.2 1-.5 1-1.500V0zM6.500 0c2.500 0 2.500 6 1.500 7v7H6.500z" fill="#222"/></symbol>
          </defs>
          <rect x="786" y="314" width="1011" height="1563" fill="#959595"/>
          <rect x="768" y="296" width="1012" height="1564" fill="#fff"/>

          <g fill="#000">
            <text x="797" y="382" font-size="50.500" textLength="560">Coffee shops on campus</text>
            <text x="797" y="435.500" font-size="32.500" textLength="527">University of Kentucky in Lexington</text>
            <g font-size="21.500">
              <text x="797.500" y="499" textLength="507">Cafe and restaurant point locations downloaded from</text>
              <text x="797.500" y="526.500" textLength="611">OpenStreetMap, 2022. Map created by YodasMaps using QGIS,</text>
              <text x="797.500" y="553.500" textLength="149">October, 2023 .</text>
              <text x="797.500" y="581" textLength="487">© OpenStreetMap, https://www.openstreetmap.org</text>
            </g>
            <text x="1556" y="424" font-size="25" textLength="92">Legend</text>
            <g font-size="17">
              <text x="1556.500" y="460" textLength="117">Coffee shops</text>
              <text x="1589" y="487" textLength="41">Cafe</text>
              <text x="1589" y="511" textLength="96">Restaurant</text>
              <text x="1589" y="535" textLength="160">(may have coffee)</text>
              <text x="1589" y="557" textLength="54">Roads</text>
              <text x="1589" y="581" textLength="102">UK Campus</text>
            </g>
            <g font-size="16.500">
              <text x="919" y="1822" textLength="44">North</text>
              <text x="1571" y="1822" textLength="103">Scale in miles</text>
            </g>
            <g font-size="16" text-anchor="middle">
              <text x="1089" y="1805">0</text><text x="1200" y="1805" textLength="37">0.25</text><text x="1312" y="1805" textLength="27">0.5</text><text x="1422.500" y="1805" textLength="37">0.75</text><text x="1545" y="1805" textLength="32">1 mi</text>
            </g>
          </g>
          <use href="#cup" x="1559" y="472" width="19" height="16"/>
          <use href="#fork" x="1563" y="499" width="10" height="12"/>
          <path d="M1556 551h27" stroke="#666" stroke-width="2"/>
          <rect x="1557" y="568" width="25" height="14" rx="1" fill="#dde0ff" stroke="#6e8cf5" stroke-width="4"/>

          <circle cx="1002" cy="1815.500" r="21.500" fill="none" stroke="#111" stroke-width="2.500"/><path d="M1002 1794v22" stroke="#111" stroke-width="3"/>
          <rect x="1089.500" y="1815.500" width="444" height="11.500" fill="#fff" stroke="#000"/>
          <path d="M1089 1818.300h111M1312 1818.300h111M1200 1824.300h112M1423 1824.300h111" stroke="#000" stroke-width="6"/>

          <!-- Map frame -->
          <g clip-path="url(#cMap)">
            <rect x="790" y="620" width="969" height="1149" filter="url(#relief)"/>
            <g mask="url(#mSoft)"><rect x="790" y="620" width="969" height="1149" filter="url(#reliefSoft)"/></g>
            <g mask="url(#mHard)" opacity=".8"><rect x="790" y="620" width="969" height="1149" filter="url(#reliefHard)"/></g>
            <ellipse cx="950" cy="655" rx="60" ry="50" fill="#d5d0cf" opacity=".7" filter="url(#soft)"/>
            <path d="M1420 620H1759V760L1650 770 1560 700 1500 780 1440 770 1400 700z" fill="url(#gNE)" opacity=".6"/>
            <path d="M1130 620H1390L1290 730 1180 680z" fill="url(#gNE)" opacity=".4"/>
            <path d="M790 1050L1020 1130 1110 1160 1060 1200 1100 1340 1140 1390 1110 1610 1260 1640 1260 1769H790z" fill="url(#gSW)" opacity=".5"/>
            <path d="M1480 1160H1759V1769H1540L1520 1600 1480 1590 1470 1480 1390 1360z" fill="url(#gE)" opacity=".4"/>
            <path d="M790 860L900 800 1050 900 1100 920 1030 1080 900 1060 790 960z" fill="url(#gW)" opacity=".45"/>

            <!-- Campus -->
            <g fill="#aab0ec" fill-opacity=".46" stroke="#6d8cf0" stroke-width="4" stroke-linejoin="round">
              <path d="M1147 734L1214 689 1233 700 1245 687 1252 693 1241 709 1264 740 1291 764 1399 662 1411 676 1407 692 1387 714 1408 742 1416 724 1421 734 1409 745 1392 763 1397 772 1412 754 1434 774 1481 1164 1365 1360 1433 1392 1441 1460 1438 1475 1467 1483 1462 1589 1517 1601 1516 1616 1334 1586 1323 1728 1265 1701 1281 1624 1120 1598 1149 1402 1164 1372 1098 1338 1120 1249 1069 1222 1076 1206 1125 1233 1150 1134 1135 1131 1139 1106 1034 1078 1095 923 1125 935 1160 857 1222 870 1226 845 1204 843 1200 826 1230 829 1228 808 1220 805 1214 815 1178 813 1174 805 1160 801 1152 807z"/>
              <path d="M1314 694L1323 703 1303 724 1294 715z"/>
            </g>
            <g fill="none" stroke="#666" stroke-opacity=".7" stroke-width="2">
              <g transform="translate(760 600) scale(.6763 .3827)">
                <path vector-effect="non-scaling-stroke" d="M95 55L78 300C80 420 110 530 170 555 230 560 270 480 330 505 380 550 400 610 440 640M88 200C75 420 120 560 180 545 240 540 280 480 320 495L500 720M105 495L205 320 290 450 290 500M120 490L210 330M400 55L470 180 520 350M410 250C380 370 400 400 330 500M500 60L560 200M450 120L520 280 590 380M45 340L78 340M50 1110L160 955 340 640 430 480 570 350M45 1090L165 925 330 640M65 850L160 960M190 620L245 740 370 950 480 1150M60 700L105 720 245 470 240 580M130 1090L180 1200C260 1340 400 1390 570 1480 620 1510 640 1560 640 1568M180 1200L370 960 480 800M45 1200L190 1560M60 1170L260 1540M245 470L330 640 500 990M440 620C450 740 500 800 540 890M540 880L640 920 700 950M565 590L690 640M550 640L690 700M560 590L550 640M580 560L760 750M520 60C560 180 640 260 740 380M610 60L680 230 800 420M700 60L760 190 880 420M800 60L900 260 1000 450M570 380C600 470 640 490 690 530M520 1010L630 1060M510 1080L610 1130M455 1130L620 1200C630 1260 620 1270 590 1265L440 1210M455 1130L440 1210M545 880L500 1140M640 920L590 1300M415 1260L400 1390M460 1270L450 1410M510 1280L495 1430M410 1320L560 1390M360 1480L560 1560M720 60L1060 520M980 60L1250 440M1120 60L1340 360M1478 340L1240 420 1180 450M1478 400L1300 450M1240 350C1240 400 1260 440 1300 450M1478 300L1380 60M1040 460L1330 60M930 300L1100 60M1200 440L1460 80M860 210L900 60"/>
              </g>
              <g transform="translate(760 1150) scale(.6763 .4847)">
                <path vector-effect="non-scaling-stroke" d="M730 20C735 120 730 180 715 225 680 290 640 310 610 430M740 20C742 120 735 190 720 230 690 290 650 320 618 425M620 440C680 480 690 500 710 540 730 590 750 600 760 620M612 445C670 480 680 510 703 545 722 590 740 600 752 622M765 630C790 680 810 700 840 720 900 750 960 760 985 870 1000 900 1040 920 1118 945M765 640C785 690 805 705 835 725 930 765 940 780 985 875M750 625C730 650 715 670 705 668 680 650 650 650 655 690 660 760 665 800 640 815 600 830 570 800 555 800M745 630C720 660 700 680 690 665 670 660 665 670 668 710L670 800C660 830 630 830 625 820M548 130L705 240M570 35C640 60 640 130 730 140L920 190C960 210 970 220 1030 270L1200 430 1478 620M845 565C880 580 870 600 900 610 930 620 935 640 945 650M860 515L930 550M500 355L605 430M490 400L605 480M45 735L180 900C210 990 280 1050 400 1110L560 1185M560 1050L620 1060 860 1250 1110 1275M620 1060L660 1130 860 1230M867 910L860 1250M865 945L1030 970M865 1070L1000 1110C1060 1140 1060 1050 1020 1050L910 1020M1130 600L1120 930 1105 1275M1140 600L1128 1000M1080 750L1180 755C1220 730 1240 720 1300 780 1400 860 1478 940 1478 1000M1120 960C1190 980 1200 1080 1240 1110L1478 1260M1180 820L1230 830 1235 900 1170 890M1240 1110L1370 1275M950 1080C940 1160 960 1200 1010 1205L1110 1200M45 250L180 350 160 450M85 200C90 240 100 260 200 300M340 20L230 560 140 900 60 1200M355 20L245 560 155 900 75 1200M450 140L390 400M460 40L400 250M400 240L380 290M220 570L560 730M280 510L450 590M285 500L460 595M190 680L540 830M160 820L530 900M430 725L540 750M480 320L430 720M390 400L330 700M100 1010L45 1100M210 1040L130 1275M290 1060L210 1275M180 920L530 1060M70 60L260 220M1040 60C1100 200 1200 190 1380 200L1478 240M1160 60L1478 220M1290 180L1255 330 1330 345M1345 190L1330 345 1478 470M1010 400C1000 460 1010 540 1020 560L1130 610M1140 600C1200 560 1220 500 1300 480M1380 60C1380 200 1390 300 1478 320M1045 830L1120 860M990 880L1000 990"/>
                <circle vector-effect="non-scaling-stroke" cx="610" cy="435" r="9" fill="#c3c5de"/><circle vector-effect="non-scaling-stroke" cx="757" cy="618" r="9" fill="#c3c5de"/>
              </g>
            </g>
            <!-- Stadium, arenas -->
            <ellipse cx="1279" cy="1328" rx="31" ry="31" fill="#b9bbda" fill-opacity=".7" stroke="#9a9cba" stroke-width="3" stroke-dasharray="6 3"/>
            <path d="M1256 1346a32 32 0 0 0 53-4" fill="none" stroke="#7d7f9c" stroke-width="4" stroke-dasharray="7 2"/>
            <path d="M1254 1345a31 31 0 0 1 10-42" fill="none" stroke="#8688a6" stroke-width="3"/>
            <path d="M1312 1388l22-52 8 2-20 54z" fill="#a4a6c6" opacity=".8"/>
            <path d="M1262 1405l14-28M1312 1390l-12-14" stroke="#9698b8" stroke-width="3"/>
            <ellipse cx="1347" cy="1466" rx="24" ry="19" fill="#bfc0de" fill-opacity=".6" stroke="#a4a6c4" stroke-width="2"/>
            <path d="M1326 1474a24 19 0 0 1 6-22" fill="none" stroke="#8486a4" stroke-width="3"/>
            <path d="M1121 1427l12-3-4 8 2 4-5 4v8l-4 14-3-8 3-10-8-6 6-3z" fill="#3a3838"/>
            <g id="pins"></g>
          </g>
          <rect x="790.500" y="620.500" width="968" height="1148" fill="none" stroke="#2b1838" stroke-width="1.500" stroke-dasharray="5 2"/>
          <g fill="#fff" stroke="#4a90c0" stroke-width="1.200"><path d="M791 621h19v19h-19zM1264.500 621h20v19h-20zM1739 621h19v19h-19zM791 1185.500h19v20h-19zM1739 1185.500h19v20h-19zM791 1749h19v19h-19zM1264.500 1749h20v19h-20zM1739 1749h19v19h-19z"/></g>
        </svg>
      </div>
    </div>

    <!-- Panels -->
    <div class="flex flex-1 h-full">
      <div class="w-[14px] shrink-0 pt-[839px] pl-[5px]"><svg class="w-[4px] h-[34px]"><rect width="4" height="34" fill="url(#pDots)"/></svg></div>
      <div class="flex flex-col flex-1 -ml-px">
        <div class="flex items-end h-[66px] border-b-2 border-[#3f3f3f] shrink-0">
          <div class="flex items-center justify-center w-[136px] h-[63px] pt-1 border-2 border-b-0 border-[#4a4a4a] rounded-t-md bg-[#323232]">Items</div>
          <div class="flex items-center justify-center w-[255px] h-[58px] ml-[2px] pt-[5px] border-2 border-b-0 border-[#404040] rounded-t-md bg-[#2d2d2d]">Undo History</div>
        </div>
        <div class="flex items-center justify-between h-[48px] pl-[6px] pr-[2px] pt-1 shrink-0"><span>Items</span><svg class="w-[50px] h-6"><use href="#dock"/></svg></div>
        <div class="flex h-[53px] border-y-2 border-[#505050] border-b-[#2a2a2a] bg-linear-to-b from-[#444] to-[#373737] shrink-0">
          <div class="w-[71px] border-r-2 border-[#555] pl-[6px] flex items-center"><svg class="w-[32px] h-[26px]" viewBox="0 0 32 26"><path d="M1 15C8 4 24 4 31 15 24 25 8 25 1 15z" fill="#e6e6e6" stroke="#888"/><circle cx="16" cy="14" r="7.500" fill="#888"/><circle cx="16" cy="14" r="4" fill="#111"/><circle cx="14" cy="12" r="1.500" fill="#fff"/><path d="M2 7C10 0 22 0 30 6" fill="none" stroke="#888" stroke-width="1.500"/></svg></div>
          <div class="w-[71px] border-r-2 border-[#555] pl-[9px] pt-[3px] flex items-center"><svg class="w-[24px] h-[32px]" viewBox="0 0 24 32"><path d="M5 17V9c0-9 14-9 14 0v8" fill="none" stroke="#e0e0e0" stroke-width="3.500"/><rect y="15" width="24" height="17" rx="3" fill="#666"/></svg></div>
          <div class="flex items-center pl-[7px] pt-[3px] text-black">Item</div>
        </div>
        <div class="h-[664px] bg-[#1e1e1e] border-b-2 border-[#2a2a2a] shrink-0">
          <div class="flex items-center h-12"><span class="ml-[6px] size-7 border-2 border-[#2a2a2a] flex items-center justify-center"><svg class="w-4 h-[18px]"><path d="M2 10l4 6L14 1" fill="none" stroke="#ddd" stroke-width="2.500"/></svg></span><span class="ml-[44px] size-7 border-2 border-[#262626]"></span><svg class="w-7 h-6 ml-[46px] mr-[15px]"><use href="#itT"/></svg><span>Cafe and restaurant point...</span></div>
          <div class="flex items-center h-12"><span class="ml-[6px] size-7 border-2 border-[#2a2a2a] flex items-center justify-center"><svg class="w-4 h-[18px]"><path d="M2 10l4 6L14 1" fill="none" stroke="#ddd" stroke-width="2.500"/></svg></span><span class="ml-[44px] size-7 border-2 border-[#262626]"></span><svg class="w-7 h-6 ml-[46px] mr-[15px]"><use href="#itT"/></svg><span>North</span></div>
          <div class="flex items-center h-12"><span class="ml-[6px] size-7 border-2 border-[#2a2a2a] flex items-center justify-center"><svg class="w-4 h-[18px]"><path d="M2 10l4 6L14 1" fill="none" stroke="#ddd" stroke-width="2.500"/></svg></span><span class="ml-[44px] size-7 border-2 border-[#262626]"></span><svg class="w-7 h-6 ml-[46px] mr-[15px]"><use href="#itT"/></svg><span>University of Kentucky in...</span></div>
          <div class="flex items-center h-12"><span class="ml-[6px] size-7 border-2 border-[#2a2a2a] flex items-center justify-center"><svg class="w-4 h-[18px]"><path d="M2 10l4 6L14 1" fill="none" stroke="#ddd" stroke-width="2.500"/></svg></span><span class="ml-[44px] size-7 border-2 border-[#262626]"></span><svg class="w-7 h-7 ml-[46px] mr-[15px]"><use href="#itLeg"/></svg><span>Legend</span></div>
          <div class="flex items-center h-12"><span class="ml-[6px] size-7 border-2 border-[#2a2a2a] flex items-center justify-center"><svg class="w-4 h-[18px]"><path d="M2 10l4 6L14 1" fill="none" stroke="#ddd" stroke-width="2.500"/></svg></span><span class="ml-[44px] size-7 border-2 border-[#262626]"></span><svg class="w-7 h-6 ml-[46px] mr-[15px]"><use href="#itT"/></svg><span>Scale in miles</span></div>
          <div class="flex items-center h-12"><span class="ml-[6px] size-7 border-2 border-[#2a2a2a] flex items-center justify-center"><svg class="w-4 h-[18px]"><path d="M2 10l4 6L14 1" fill="none" stroke="#ddd" stroke-width="2.500"/></svg></span><span class="ml-[44px] size-7 border-2 border-[#262626]"></span><svg class="w-7 h-5 ml-[46px] mr-[15px]"><use href="#itPic"/></svg><span>North Arrow</span></div>
          <div class="flex items-center h-12"><span class="ml-[6px] size-7 border-2 border-[#2a2a2a] flex items-center justify-center"><svg class="w-4 h-[18px]"><path d="M2 10l4 6L14 1" fill="none" stroke="#ddd" stroke-width="2.500"/></svg></span><span class="ml-[44px] size-7 border-2 border-[#262626]"></span><svg class="w-7 h-6 ml-[46px] mr-[15px]"><use href="#itT"/></svg><span>Coffee shops on campus</span></div>
          <div class="flex items-center h-12"><span class="ml-[6px] size-7 border-2 border-[#2a2a2a] flex items-center justify-center"><svg class="w-4 h-[18px]"><path d="M2 10l4 6L14 1" fill="none" stroke="#ddd" stroke-width="2.500"/></svg></span><span class="ml-[44px] size-7 border-2 border-[#262626]"></span><svg class="w-7 h-2 ml-[46px] mr-[15px]"><use href="#itBar"/></svg><span>&lt;Scalebar&gt;</span></div>
          <div class="flex items-center h-12 bg-[#464646] font-bold text-white"><span class="ml-[6px] size-7 border-2 border-[#2a2a2a] bg-[#1e1e1e] flex items-center justify-center"><svg class="w-4 h-[18px]"><path d="M2 10l4 6L14 1" fill="none" stroke="#ddd" stroke-width="2.500"/></svg></span><span class="ml-[44px] size-7 border-2 border-[#2a2a2a] bg-[#1e1e1e]"></span><svg class="w-7 h-7 ml-[46px] mr-[15px]"><use href="#itMap"/></svg><span class="tracking-[.015em]">Map 1</span></div>
        </div>
        <div class="flex h-[16px] justify-center items-center shrink-0"><svg class="w-[34px] h-[4px]"><rect width="34" height="4" fill="url(#pDots)"/></svg></div>
        <div class="flex items-end h-[62px] border-b-2 border-[#3f3f3f] shrink-0">
          <div class="flex items-center justify-center w-[160px] h-[55px] pt-[3px] border-2 border-b-0 border-[#404040] rounded-t-md bg-[#2d2d2d]">Guides</div>
          <div class="flex items-center justify-center w-[155px] h-[55px] pt-[3px] ml-[2px] border-2 border-b-0 border-[#404040] rounded-t-md bg-[#2d2d2d]">Layout</div>
          <div class="flex items-center justify-center w-[292px] h-[60px] pt-[4px] ml-[1px] border-2 border-b-0 border-[#4a4a4a] rounded-t-md bg-[#323232] tracking-[.01em]">Item Properties</div>
        </div>
        <div class="flex items-center justify-between h-[52px] pl-[6px] pr-[2px] pt-[3px] shrink-0 tracking-[.01em]"><span>Item Properties</span><svg class="w-[50px] h-6"><use href="#dock"/></svg></div>

        <div class="flex items-end h-[69px] pl-[21px] font-bold tracking-[.045em] shrink-0">Page Size</div>
        <div class="relative flex flex-col justify-start gap-[16px] w-[873px] h-[321px] ml-[18px] mt-[8px] pt-[22px] pl-[20px] border-2 border-[#3c3c3c] rounded-md shrink-0">
          <div class="flex items-center h-14">
            <span class="w-[193px] pt-[4px] tracking-[.01em]">Size</span>
            <div class="flex items-center justify-between w-[561px] h-14 pl-[8px] pr-[12px] rounded-md border-2 border-[#585858] bg-linear-to-b from-[#4a4a4a] to-[#3c3c3c] text-black"><span class="pt-[4px]">ANSI B</span><svg class="w-4 h-2"><path d="M0 0h16l-8 8z" fill="#161616"/></svg></div>
            <svg class="w-[52px] h-[34px] ml-[20px]"><use href="#ovr"/></svg>
          </div>
          <div class="flex items-center h-14">
            <span class="w-[193px] pt-[4px] tracking-[.01em]">Orientation</span>
            <div class="flex items-center justify-between w-[561px] h-14 pl-[8px] pr-[12px] rounded-md border-2 border-[#585858] bg-linear-to-b from-[#4a4a4a] to-[#3c3c3c] text-black"><span class="pt-[4px] tracking-[.015em]">Portrait</span><svg class="w-4 h-2"><path d="M0 0h16l-8 8z" fill="#161616"/></svg></div>
            <svg class="w-[52px] h-[34px] ml-[20px]"><use href="#ovr"/></svg>
          </div>
          <div class="flex items-center h-14">
            <span class="w-[193px] pt-[4px] tracking-[.01em]">Width</span>
            <div class="flex w-[359px] h-[54px] rounded-md border-2 border-[#282828] bg-[#1e1e1e]"><span class="flex-1 flex items-center pt-[4px] pl-[8px] tracking-[.035em]">11.000</span><span class="w-[28px] flex items-center justify-center border-2 border-[#505050] bg-[#3d3d3d] rounded-r-md"><svg class="w-4 h-[32px]"><path d="M1 8h14L8 0zM1 23h14l-7 8z" fill="#b5b5b5"/></svg></span></div>
            <svg class="w-[52px] h-[34px] ml-[20px]"><use href="#ovr"/></svg>
          </div>
          <div class="flex items-center h-14">
            <span class="w-[193px] pt-[4px] tracking-[.01em]">Height</span>
            <div class="flex w-[359px] h-[54px] rounded-md border-2 border-[#282828] bg-[#1e1e1e]"><span class="flex-1 flex items-center pt-[4px] pl-[8px] tracking-[.03em]">17.000</span><span class="w-[28px] flex items-center justify-center border-2 border-[#505050] bg-[#3d3d3d] rounded-r-md"><svg class="w-4 h-[32px]"><path d="M1 8h14L8 0zM1 23h14l-7 8z" fill="#b5b5b5"/></svg></span></div>
            <svg class="w-[52px] h-[34px] ml-[20px]"><use href="#ovr"/></svg>
          </div>
          <div class="absolute left-[672px] top-[179px] flex items-center gap-[25px]">
            <svg class="w-[27px] h-[100px]" viewBox="0 0 27 100"><path d="M0 2h14v26M0 98h14V74" fill="none" stroke="#505050" stroke-width="3"/><path d="M6 46c0-9 16-9 16 0 0 5-3 5-4 8" fill="none" stroke="#666" stroke-width="3"/><rect x="2" y="51" width="25" height="16" rx="3" fill="#484848"/></svg>
            <div class="flex items-center justify-between w-[123px] h-14 pl-[8px] pr-[12px] rounded-md border-2 border-[#484848] bg-[#3a3a3a] text-[#1c1c1c]"><span class="pt-[4px]">in</span><svg class="w-4 h-2"><path d="M0 0h16l-8 8z" fill="#252525"/></svg></div>
          </div>
        </div>
        <div class="flex items-center h-[44px] mt-[19px] pl-[17px] shrink-0"><span class="size-7 bg-[#1e1e1e] border-2 border-[#262626] mr-[10px]"></span><span class="pt-[3px]">Exclude page from exports</span><svg class="w-[52px] h-[34px] ml-[33px]"><use href="#ovr"/></svg></div>
        <div class="flex items-center h-[54px] mt-[20px] pl-[16px] shrink-0"><span class="w-[208px] pt-[3px] tracking-[.01em]">Background</span>
          <div class="w-[644px] h-[54px] p-2 rounded-md border-2 border-[#4c4c4c] bg-[#3a3a3a]"><div class="h-full bg-white"></div></div>
          <div class="flex items-center justify-center w-[21px] h-[54px] ml-[3px] rounded-md border-2 border-[#4c4c4c] bg-[#3a3a3a]"><svg class="w-[14px] h-2 shrink-0"><path d="M0 0h14l-7 8z" fill="#bbb"/></svg></div>
        </div>
      </div>
    </div>
  </div>

  <!-- Status bar -->
  <div class="relative flex items-center flex-1 pl-[11px] pt-[2px]">
    <span class="w-[2057px] pt-[8px] tracking-[.012em]">1 item selected</span>
    <span class="w-[251px] pt-[8px] tracking-[.018em] whitespace-nowrap">x: 272.418 mm</span>
    <span class="w-[251px] pt-[8px] tracking-[.018em] whitespace-nowrap">y: 7.18344 mm</span>
    <span class="w-[214px] pt-[8px] tracking-[.01em]">page: 1</span>
    <div class="flex w-[317px] h-[58px] rounded-md border-2 border-[#282828] bg-[#1e1e1e]"><span class="flex-1 flex items-center pl-[4px] pt-[7px] tracking-[.025em]">56.7%</span><span class="w-[38px] flex items-center justify-center border-2 border-[#505050] bg-[#3f3f3f] rounded-r-md"><svg class="w-4 h-2"><path d="M0 0h16l-8 8z" fill="#161616"/></svg></span></div>
    <svg class="w-[194px] h-6 ml-[17px]" viewBox="0 0 194 24"><rect y="8" width="194" height="8" rx="2" fill="#363636" stroke="#272727" stroke-width="2"/><rect x="1" y="9" width="7" height="6" fill="#5b9fe8"/><rect x="9" y="1" width="21" height="21" rx="4" fill="#484848" stroke="#5e5e5e" stroke-width="2"/></svg>
    <svg class="absolute right-0 bottom-0 w-[22px] h-[22px]"><path d="M22 0v22H0z" fill="url(#pDots)"/></svg>
  </div>
</div>

<!-- Create Print Layout dialog -->
<div class="absolute left-[1231px] top-[777px] flex flex-col w-[863px] h-[385px] rounded-[20px] bg-[#323232] border-2 border-[#6a6a6a] shadow-[0_0_0_1.5px_#0a0a0a,0_36px_70px_6px_rgba(0,0,0,.55),0_0_30px_rgba(0,0,0,.2)] overflow-hidden">
  <div class="relative flex items-center justify-center h-[54px] bg-[#353736] border-b-2 border-black text-[25.5px] font-bold text-[#a3a5a4] shrink-0">
    <div class="absolute left-[13px] top-[13px] flex gap-[16px]"><span class="size-6 rounded-full bg-[#f25f54]"></span><span class="size-6 rounded-full bg-[#56585a]"></span><span class="size-6 rounded-full bg-[#4ebb48]"></span></div>
    <span class="-translate-x-[2px] -translate-y-px tracking-[.025em]">Create Print Layout</span>
  </div>
  <div class="flex flex-col flex-1 px-[20px] pt-[22px]">
    <p class="leading-[44px] whitespace-nowrap tracking-[.006em]">Enter a unique print layout title<br>(a title will be automatically generated if left empty)</p>
    <div class="flex items-center h-[58px] mt-[11px] pl-[3px] pt-[4px] rounded-md border-2 border-[#31486a] bg-[#1e1e1e] tracking-[.016em]"><span>my-campus-map-</span><span class="w-[2px] h-[42px] -mt-1 bg-white -mx-px"></span><span>example</span></div>
    <div class="flex items-center mt-[67px] text-black">
      <div class="flex items-center justify-center w-[158px] h-[58px] pt-[4px] rounded-md border-2 border-[#545454] outline-1 outline-[#222] bg-linear-to-b from-[#484848] to-[#3a3a3a]">Help</div>
      <div class="flex items-center justify-center w-[158px] h-[58px] pt-[4px] ml-auto rounded-md border-2 border-[#545454] outline-1 outline-[#222] bg-linear-to-b from-[#484848] to-[#3a3a3a]">Cancel</div>
      <div class="flex items-center justify-center w-[160px] h-[60px] pt-[4px] ml-[13px] rounded-md border-[3px] border-[#6299d6] bg-linear-to-b from-[#4f545d] to-[#40454e]">OK</div>
    </div>
  </div>
</div>

<!-- Callout -->
<svg class="absolute left-0 top-0 w-[1300px] h-[1000px]" viewBox="0 0 1300 1000"><rect x="101.500" y="59" width="69.500" height="70" fill="none" stroke="#d2361c" stroke-width="10.500"/><path d="M174 95L1215 941" stroke="#d2361c" stroke-width="13"/><path d="M1243 964L1186 951 1223 909z" fill="#d2361c"/></svg>

<script>
  const NS = 'http://www.w3.org/2000/svg';
  const add = (p, n, a, t) => { const e = document.createElementNS(NS, n); for (const k in a) e.setAttribute(k, a[k]); if (t !== undefined) e.textContent = t; p.appendChild(e); return e; };
  const font = { 'font-family': 'Inter, sans-serif', 'font-size': 17.5, fill: '#c8c8c8' };
  const hr = document.getElementById('hr'), vr = document.getElementById('vr'), step = 18.09;
  for (let i = -36; i <= 92; i++) {
    const x = Math.round(768 + i * step); if (x < 114 || x > 2438) continue;
    const y = i % 10 === 0 ? 212 : i % 5 === 0 ? 231 : 235;
    add(hr, 'path', { d: `M${x} ${y}V242`, stroke: '#d0d0d0', 'stroke-width': 2 });
    if (i % 10 === 0) add(hr, 'text', { x: x + 3, y: 228, ...font }, i * 5);
  }
  add(hr, 'path', { d: 'M1754 212V242', stroke: '#d8402c', 'stroke-width': 2 });
  for (let i = -2; i <= 90; i++) {
    const y = Math.round(296 + i * step); if (y < 242 || y > 1913) continue;
    const x = i % 10 === 0 ? 80 : i % 5 === 0 ? 99 : 103;
    add(vr, 'path', { d: `M${x} ${y}H110`, stroke: '#d0d0d0', 'stroke-width': 2 });
    if (i % 10 === 0) add(vr, 'text', { transform: `translate(96.500 ${y + 5}) rotate(-90)`, 'text-anchor': 'end', ...font }, i * 5);
  }
  add(vr, 'path', { d: 'M80 321.5H110', stroke: '#d8402c', 'stroke-width': 2 });
  const pins = document.getElementById('pins');
  const A = (x, y) => [760 + x / 1.479, 600 + y / 2.613], B = (x, y) => [760 + x / 1.479, 1150 + y / 2.063];
  [A(668,144),A(680,162),A(972,98),A(862,205),A(886,224),A(880,212),A(854,292),A(752,320),A(818,350),A(797,378),A(406,540),A(430,517),A(292,748),A(330,780),A(360,755),A(368,768),A(394,828),A(123,1058),A(227,1172),A(660,665),B(365,1000),B(330,1056),B(1441,522),B(1462,546),B(1452,583)]
    .forEach(([x, y]) => add(pins, 'use', { href: '#fork', x: x - 6, y: y - 7, width: 12, height: 14 }));
  [A(880,408),A(1246,365),A(672,678),A(600,1033),A(657,1090),A(611,1413),B(290,1037)]
    .forEach(([x, y]) => add(pins, 'use', { href: '#cup', x: x - 8, y: y - 7, width: 18, height: 16 }));
</script>
</body>
</html>
